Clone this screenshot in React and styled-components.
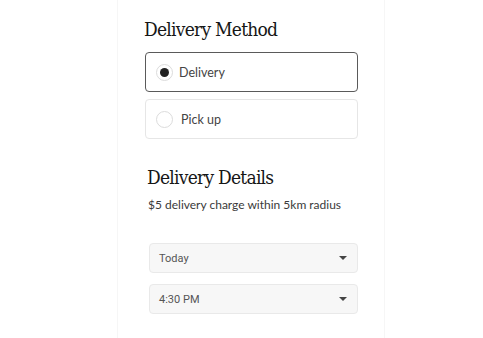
import styled, { createGlobalStyle } from "styled-components";

const GlobalStyle = createGlobalStyle`
  html, body {
    margin: 0;
    padding: 0;
    background: #ffffff;
  }
  * {
    box-sizing: border-box;
  }
`;

const Page = styled.div`
  width: 483px;
  height: 338px;
  overflow: hidden;
  padding-left: 117px;
`;

const Panel = styled.div`
  width: 268px;
  height: 338px;
  border-left: 1px solid #f6f6f6;
  border-right: 1px solid #f6f6f6;
  padding: 16px 26px 0 27px;
  display: flex;
  flex-direction: column;
`;

const Heading = styled.h2`
  margin: 0 0 0 ${(p) => p.$indent || 0}px;
  font-family: "DejaVu Serif", "Liberation Serif", serif;
  font-stretch: condensed;
  font-weight: normal;
  font-size: 19px;
  letter-spacing: -0.75px;
  color: #161616;
  line-height: 26px;
`;

const Options = styled.div`
  display: flex;
  flex-direction: column;
  gap: 7px;
  margin-top: 10px;
`;

const Option = styled.label`
  display: flex;
  align-items: center;
  height: 40px;
  padding-left: 10px;
  border: 1px solid ${(p) => (p.$selected ? "#5a5a5a" : "#e6e6e6")};
  border-radius: 4px;
  background: #fff;
  font-family: "Lato", "Open Sans", sans-serif;
  font-size: 12.5px;
  color: #444;
`;

const Radio = styled.span`
  width: 17px;
  height: 17px;
  border-radius: 50%;
  border: 1px solid #dcdcdc;
  display: flex;
  align-items: center;
  justify-content: center;
  margin-right: ${(p) => (p.$selected ? 6 : 8)}px;
  &::after {
    content: "";
    width: 9px;
    height: 9px;
    border-radius: 50%;
    background: #222;
    display: ${(p) => (p.$selected ? "block" : "none")};
  }
`;

const Section = styled.div`
  margin-top: 25px;
  display: flex;
  flex-direction: column;
`;

const Note = styled.p`
  margin: 7px 0 0 3px;
  font-family: "Lato", "Open Sans", sans-serif;
  font-size: 12px;
  color: #3a3a3a;
`;

const Selects = styled.div`
  margin: 31px 0 0 4px;
  display: flex;
  flex-direction: column;
  gap: 11px;
`;

const Select = styled.div`
  height: 30px;
  border: 1px solid #e9e9e9;
  border-radius: 4px;
  background: #f7f7f7;
  display: flex;
  align-items: center;
  justify-content: space-between;
  padding: 0 9px 0 9px;
  font-family: "Roboto", "Liberation Sans", sans-serif;
  font-size: 11px;
  color: #555;
`;

const Caret = styled.span`
  width: 0;
  height: 0;
  border-left: 4px solid transparent;
  border-right: 4px solid transparent;
  border-top: 4px solid #444;
  margin-right: 1px;
`;

export default function App() {
  return (
    <Page>
      <GlobalStyle />
      <Panel>
        <Heading $indent={-1}>Delivery Method</Heading>
        <Options>
          <Option $selected>
            <Radio $selected />
            Delivery
          </Option>
          <Option>
            <Radio />
            Pick up
          </Option>
        </Options>
        <Section>
          <Heading $indent={2}>Delivery Details</Heading>
          <Note>$5 delivery charge within 5km radius</Note>
          <Selects>
            <Select>
              Today
              <Caret />
            </Select>
            <Select>
              4:30 PM
              <Caret />
            </Select>
          </Selects>
        </Section>
      </Panel>
    </Page>
  );
}
